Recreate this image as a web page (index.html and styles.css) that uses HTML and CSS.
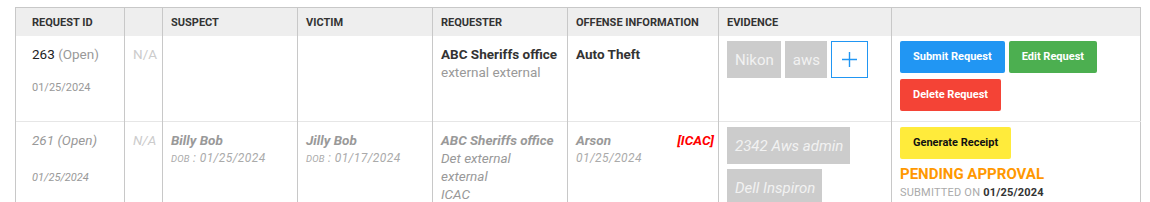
FILE: index.html
```html
<!DOCTYPE html>
<html>
<head>
<meta charset="utf-8">
<link rel="stylesheet" href="styles.css">
</head>
<body>
<table class="grid">
  <colgroup>
    <col class="c-id"><col class="c-na"><col class="c-sus"><col class="c-vic"><col class="c-req"><col class="c-off"><col class="c-evi"><col class="c-act">
  </colgroup>
  <thead>
    <tr>
      <th class="first">Request ID</th>
      <th></th>
      <th>Suspect</th>
      <th>Victim</th>
      <th>Requester</th>
      <th>Offense Information</th>
      <th>Evidence</th>
      <th></th>
    </tr>
  </thead>
  <tbody>
    <tr>
      <td class="first">
        <div class="rid">263 <span class="status">(Open)</span></div>
        <div class="date">01/25/2024</div>
      </td>
      <td class="na">N/A</td>
      <td></td>
      <td></td>
      <td>
        <div class="strong">ABC Sheriffs office</div>
        <div class="muted">external external</div>
      </td>
      <td><div class="strong">Auto Theft</div></td>
      <td class="evi">
        <div class="chips">
          <span class="chip">Nikon</span><span class="chip">aws</span><span class="add"><svg width="17" height="17" viewBox="0 0 17 17"><path d="M8.5 1v15M1 8.5h15" stroke="#2196f3" stroke-width="1.4" fill="none"/></svg></span>
        </div>
      </td>
      <td class="act">
        <div class="btns">
          <span class="btn blue">Submit Request</span><span class="btn green">Edit Request</span><span class="btn red">Delete Request</span>
        </div>
      </td>
    </tr>
    <tr class="closed">
      <td class="first">
        <div class="rid">261 (Open)</div>
        <div class="date">01/25/2024</div>
      </td>
      <td class="na">N/A</td>
      <td>
        <div class="strong">Billy Bob</div>
        <div class="dob"><span class="sc">DOB</span> : 01/25/2024</div>
      </td>
      <td>
        <div class="strong">Jilly Bob</div>
        <div class="dob"><span class="sc">DOB</span> : 01/17/2024</div>
      </td>
      <td>
        <div class="strong">ABC Sheriffs office</div>
        <div class="muted">Det external external</div>
        <div class="muted">ICAC</div>
      </td>
      <td>
        <span class="icac">[ICAC]</span>
        <div class="strong">Arson</div>
        <div class="dob">01/25/2024</div>
      </td>
      <td class="evi">
        <div class="chips stack">
          <span class="chip">2342 Aws admin</span><span class="chip">Dell Inspiron</span>
        </div>
      </td>
      <td class="act">
        <div class="btns">
          <span class="btn yellow">Generate Receipt</span>
        </div>
        <div class="pending">PENDING APPROVAL</div>
        <div class="submitted">SUBMITTED ON <b>01/25/2024</b></div>
      </td>
    </tr>
  </tbody>
</table>
</body>
</html>
```

FILE: styles.css
```css
html, body {
  margin: 0;
  padding: 0;
  background: #fff;
}
body {
  padding: 7px 10px 0 15px;
  font-family: Roboto, "Liberation Sans", sans-serif;
  color: #333;
}
.grid {
  border-collapse: collapse;
  table-layout: fixed;
  width: 1125px;
  border: 1px solid #c8c8c8;
}
.c-id { width: 109px; }
.c-na { width: 38px; }
.c-sus { width: 135px; }
.c-vic { width: 135px; }
.c-req { width: 135px; }
.c-off { width: 151px; }
.c-evi { width: 173px; }
.c-act { width: 249px; }

th {
  background: #eeeeee;
  height: 28px;
  padding: 0 8px;
  text-align: left;
  font-size: 11px;
  font-weight: 700;
  text-transform: uppercase;
  color: #333;
  border-left: 1px solid #c8c8c8;
  vertical-align: middle;
}
th.first, td.first { padding-left: 16px; }
td {
  vertical-align: top;
  padding: 9px 8px 4px;
  font-size: 13.5px;
  line-height: 18px;
  border-left: 1px solid #c8c8c8;
  border-top: 1px solid #e6e6e6;
}
tbody tr:first-child td { border-top: none; }
td.evi, td.act { padding-top: 5px; }
tr.closed td { padding-top: 9px; }
tr.closed td.evi, tr.closed td.act { padding-top: 5px; }

.rid { color: #222; }
.status { color: #999; }
.date { margin-top: 16px; font-size: 11px; color: #999; }
.closed .date { margin-top: 20px; }
.na { color: #ccc; }
.strong { font-weight: 700; color: #333; }
.muted { color: #999; }

.chips { display: flex; flex-wrap: wrap; gap: 5px 4px; }
.chips.stack { flex-direction: column; align-items: flex-start; }
.chip {
  display: flex;
  align-items: center;
  height: 37px;
  padding: 0 7px 0 8px;
  background: #cccccc;
  color: #f2f2f2;
  font-size: 15px;
}
.add {
  display: flex;
  align-items: center;
  justify-content: center;
  box-sizing: border-box;
  width: 37px;
  height: 37px;
  border: 1px solid #2196f3;
}

.btns { display: flex; flex-wrap: wrap; gap: 6px 4px; width: 230px; }
.btn {
  display: flex;
  align-items: center;
  height: 32px;
  padding: 0 13px;
  border-radius: 2px;
  font-size: 11px;
  font-weight: 700;
  color: #fff;
}
.blue { background: #2196f3; }
.green { background: #4caf50; }
.red { background: #f44336; }
.yellow { background: #ffeb3b; color: #111; }
td.act { padding-bottom: 10px; }

.closed td { font-style: italic; }
.closed .rid, .closed .status { color: #999; }
.closed .strong { color: #999; }
.closed .na { color: #ccc; }
.dob { font-size: 12px; color: #aaa; letter-spacing: 0.4px; }
.sc { font-size: 9.5px; letter-spacing: 0.2px; }
.icac {
  float: right;
  margin-right: -4px;
  color: #ff0000;
  font-weight: 700;
}
.closed .act, .closed .act .btn { font-style: normal; }
.pending {
  margin-top: 6px;
  font-size: 15px;
  font-weight: 700;
  color: #ff9800;
  line-height: 18px;
}
.submitted {
  margin-top: 2px;
  font-size: 11px;
  letter-spacing: 0.2px;
  color: #aaa;
  line-height: 16px;
}
.submitted b { color: #333; font-weight: 700; }
```
